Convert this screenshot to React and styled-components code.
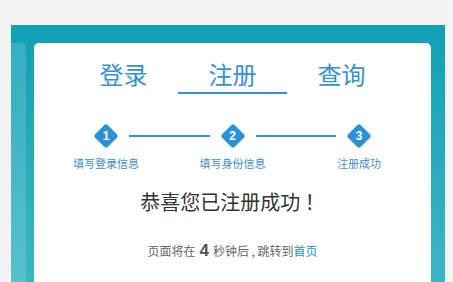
import React from 'react'
import styled, { createGlobalStyle } from 'styled-components'

const GlobalStyle = createGlobalStyle`
  html, body {
    margin: 0;
    padding: 0;
    background: #f3f3f3;
    font-family: "Microsoft YaHei", "Noto Sans CJK SC", "Liberation Sans", sans-serif;
  }
`

const Page = styled.div`
  height: 282px;
  padding-top: 25px;
  box-sizing: border-box;
  overflow: hidden;
`

const Panel = styled.div`
  margin: 0 8px 0 11px;
  height: 257px;
  background: linear-gradient(#10a0b6, #3db6c4);
  display: flex;
  gap: 8px;
  padding: 18px 14px 0 0;
  box-sizing: border-box;
`

const BackCard = styled.div`
  width: 15px;
  background: rgba(255, 255, 255, 0.14);
  border-top-right-radius: 4px;
`

const Card = styled.div`
  flex: 1;
  background: #fff;
  border-radius: 5px 5px 0 0;
  padding-top: 12px;
  display: flex;
  flex-direction: column;
  align-items: center;
`

const Tabs = styled.div`
  display: flex;
`

const Tab = styled.div`
  width: 109px;
  text-align: center;
  font-size: 24px;
  line-height: 37px;
  color: #3393d4;
  border-bottom: 2px solid ${p => (p.$active ? '#3393d4' : 'transparent')};
`

const Steps = styled.div`
  display: grid;
  grid-template-columns: repeat(3, 126.5px);
  margin-top: 29px;
`

const Step = styled.div`
  position: relative;
  display: flex;
  flex-direction: column;
  align-items: center;

  &:not(:last-child)::after {
    content: '';
    position: absolute;
    top: 13px;
    left: calc(50% + 23px);
    width: calc(100% - 46px);
    height: 2px;
    margin-top: -1px;
    background: #2a93d5;
  }
`

const Diamond = styled.div`
  width: 26px;
  height: 26px;
  position: relative;
  display: flex;
  align-items: center;
  justify-content: center;
  color: #fff;
  font-family: "Liberation Sans", sans-serif;
  font-weight: bold;
  font-size: 12px;

  &::before {
    content: '';
    position: absolute;
    left: 4px;
    top: 4px;
    width: 18px;
    height: 18px;
    border-radius: 3px;
    background: #2a93d5;
    transform: rotate(45deg);
  }

  span {
    position: relative;
  }
`

const StepLabel = styled.div`
  margin-top: 6px;
  font-size: 11px;
  line-height: 16px;
  color: #3a8fcf;
`

const Title = styled.div`
  margin-top: 16px;
  font-size: 20px;
  line-height: 30px;
  color: #333;
`

const Notice = styled.div`
  margin-top: 24px;
  font-size: 12px;
  line-height: 20px;
  color: #666;
`

const Count = styled.b`
  font-family: "Liberation Sans", sans-serif;
  font-size: 17px;
  color: #555;
  margin: 0 4px;
`

const Link = styled.a`
  color: #2a8fd0;
  text-decoration: none;
`

const tabs = [
  { name: '登录' },
  { name: '注册', active: true },
  { name: '查询' },
]

const steps = ['填写登录信息', '填写身份信息', '注册成功']

export default function App() {
  return (
    <Page>
      <GlobalStyle />
      <Panel>
        <BackCard />
        <Card>
          <Tabs>
            {tabs.map(t => (
              <Tab key={t.name} $active={t.active}>
                {t.name}
              </Tab>
            ))}
          </Tabs>
          <Steps>
            {steps.map((s, i) => (
              <Step key={s}>
                <Diamond>
                  <span>{i + 1}</span>
                </Diamond>
                <StepLabel>{s}</StepLabel>
              </Step>
            ))}
          </Steps>
          <Title>恭喜您已注册成功 ！</Title>
          <Notice>
            页面将在<Count>4</Count>秒钟后 , 跳转到<Link href="#">首页</Link>
          </Notice>
        </Card>
      </Panel>
    </Page>
  )
}
